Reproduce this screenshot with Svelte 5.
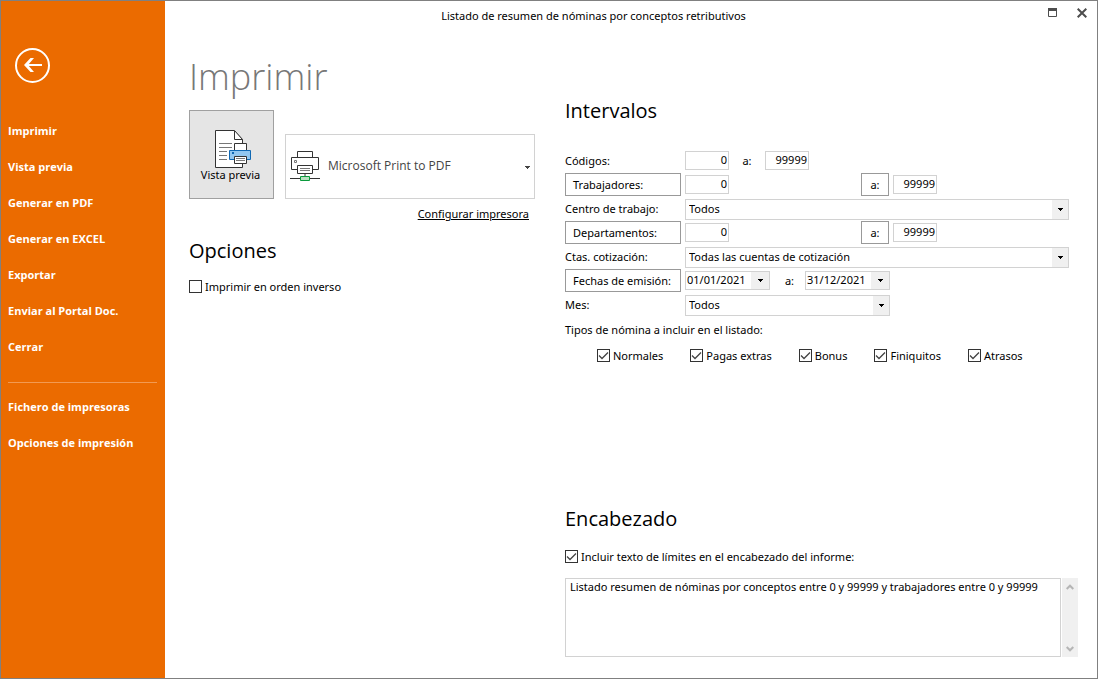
<script>
  const actions = [
    'Imprimir',
    'Vista previa',
    'Generar en PDF',
    'Generar en EXCEL',
    'Exportar',
    'Enviar al Portal Doc.',
    'Cerrar'
  ];
  const settings = ['Fichero de impresoras', 'Opciones de impresión'];

  let types = $state([
    { name: 'Normales', checked: true },
    { name: 'Pagas extras', checked: true },
    { name: 'Bonus', checked: true },
    { name: 'Finiquitos', checked: true },
    { name: 'Atrasos', checked: true }
  ]);

  let reverse = $state(false);
  let includeLimits = $state(true);
  let headerText = $state(
    'Listado resumen de nóminas por conceptos entre 0 y 99999 y trabajadores entre 0 y 99999'
  );
</script>

{#snippet arrow()}
  <svg class="arrow" width="5" height="3" viewBox="0 0 5 3" aria-hidden="true"><path d="M0 0h5v1H4v1H3v1H2V2H1V1H0z" fill="currentColor" /></svg>
{/snippet}

{#snippet dateField(label, value)}
  <span class="date">
    <input type="text" aria-label={label} {value} />
    <button type="button" aria-label="Abrir calendario">{@render arrow()}</button>
  </span>
{/snippet}

<div class="window">
  <aside>
    <button class="back" type="button" aria-label="Volver">
      <svg width="36" height="36" viewBox="0 0 36 36" fill="none" stroke="#fff">
        <circle cx="17.500" cy="18.500" r="16.500" stroke-width="2" />
        <path d="M11 18H27" stroke-width="2" />
        <path d="M19 11h-3.500L9 18l6.500 7H19l-6-7z" fill="#fff" stroke="none" />
      </svg>
    </button>
    <nav>
      {#each actions as item}
        <a href="#accion">{item}</a>
      {/each}
      <hr />
      {#each settings as item}
        <a href="#ajuste">{item}</a>
      {/each}
    </nav>
  </aside>

  <main>
    <header>
      <p>Listado de resumen de nóminas por conceptos retributivos</p>
      <div class="controls">
        <button type="button" aria-label="Maximizar">
          <svg width="9" height="9" viewBox="0 0 9 9"><path d="M.5 1h8v7.500h-8z" fill="none" stroke="#4d4d4d" /><path d="M0 0h9v3H0z" fill="#4d4d4d" /></svg>
        </button>
        <button type="button" aria-label="Cerrar ventana">
          <svg width="10" height="10" viewBox="0 0 10 10"><path d="M.7.7l8.600 8.600M9.300.7L.7 9.300" stroke="#4d4d4d" stroke-width="2" /></svg>
        </button>
      </div>
    </header>

    <div class="columns">
      <section class="print">
        <h1>Imprimir</h1>
        <div class="device">
          <button class="preview" type="button">
            <svg width="37" height="38" viewBox="0 0 37 38" fill="none" stroke="#333">
              <path d="M.5.500H19L27.500 9.500V37.500H.5z" fill="#fff" />
              <path d="M19.500.5V9.500H27.500z" fill="#fff" />
              <path d="M4 13.500H17M4 17.500H17M4 21.500H12M4 25.500H12M4 29.500H12" stroke="#777" />
              <path d="M19.500 13.500H31.500V20.500H19.500z" fill="#fff" />
              <path d="M14.500 20.500H35.500V29.500H14.500z" fill="#92c7f0" stroke="#1068b3" />
              <path d="M17 22h2v2h-2z" fill="#1068b3" stroke="none" />
              <path d="M19.500 26.500H31.500V33.500H19.500z" fill="#fff" />
              <path d="M21 28.500H30M21 30.500H30" stroke="#777" />
            </svg>
            <span>Vista previa</span>
          </button>
          <div class="printer">
            <select aria-label="Impresora"><option>Microsoft Print to PDF</option></select>
            <svg class="device-icon" width="31" height="31" viewBox="0 0 31 31" fill="none" stroke="#333" aria-hidden="true">
              <path d="M7.500.5H22.500V6.500H7.500z" fill="#fff" />
              <path d="M1.500 6.500H28.500V18.500H1.500z" fill="#fff" />
              <path d="M4.500 9.500h2v2h-2z" stroke="#777" />
              <path d="M7.500 14.500H22.500V22.500H7.500z" fill="#fff" />
              <path d="M10 17.500H20M10 19.500H20" stroke="#777" />
              <path d="M15 23V25" stroke="#999" stroke-width="2" />
              <path d="M0 27.500H30" />
              <path d="M10.500 25.500H19.500V29.500H10.500z" fill="#b8dfc0" stroke="#0a9a3c" />
            </svg>
            {@render arrow()}
          </div>
        </div>
        <a class="configure" href="#configurar">Configurar impresora</a>
        <h2>Opciones</h2>
        <label class="check"><input type="checkbox" bind:checked={reverse} />Imprimir en orden inverso</label>
      </section>

      <section class="report">
        <h2>Intervalos</h2>
        <div class="form">
          <div class="row">
            <label class="name" for="codes-from">Códigos:</label>
            <input class="number" id="codes-from" type="text" value="0" />
            <label class="to" for="codes-to">a:</label>
            <input class="number" id="codes-to" type="text" value="99999" />
          </div>
          <div class="row">
            <button class="name" type="button">Trabajadores:</button>
            <input class="number" type="text" aria-label="Trabajadores desde" value="0" />
            <button class="until" type="button">a:</button>
            <input class="number" type="text" aria-label="Trabajadores hasta" value="99999" />
          </div>
          <div class="row">
            <label class="name" for="centre">Centro de trabajo:</label>
            <span class="select wide"><select id="centre"><option>Todos</option></select>{@render arrow()}</span>
          </div>
          <div class="row">
            <button class="name" type="button">Departamentos:</button>
            <input class="number" type="text" aria-label="Departamentos desde" value="0" />
            <button class="until" type="button">a:</button>
            <input class="number" type="text" aria-label="Departamentos hasta" value="99999" />
          </div>
          <div class="row">
            <label class="name" for="accounts">Ctas. cotización:</label>
            <span class="select wide"><select id="accounts"><option>Todas las cuentas de cotización</option></select>{@render arrow()}</span>
          </div>
          <div class="row">
            <button class="name" type="button">Fechas de emisión:</button>
            {@render dateField('Fecha de emisión desde', '01/01/2021')}
            <span class="to">a:</span>
            {@render dateField('Fecha de emisión hasta', '31/12/2021')}
          </div>
          <div class="row">
            <label class="name" for="month">Mes:</label>
            <span class="select month"><select id="month"><option>Todos</option></select>{@render arrow()}</span>
          </div>
        </div>
        <fieldset>
          <legend>Tipos de nómina a incluir en el listado:</legend>
          <div class="types">
            {#each types as type}
              <label class="check"><input type="checkbox" bind:checked={type.checked} />{type.name}</label>
            {/each}
          </div>
        </fieldset>

        <div class="heading">
          <h2>Encabezado</h2>
          <label class="check"><input type="checkbox" bind:checked={includeLimits} />Incluir texto de límites en el encabezado del informe:</label>
          <div class="text">
            <textarea aria-label="Texto del encabezado" bind:value={headerText}></textarea>
            <div class="scroll">
              <button type="button" aria-label="Subir"><svg width="8" height="6" viewBox="0 0 8 6"><path d="M.7 5L4 1.700 7.300 5" fill="none" stroke="#b5b5b5" stroke-width="2" /></svg></button>
              <button type="button" aria-label="Bajar"><svg width="8" height="6" viewBox="0 0 8 6"><path d="M.7 1L4 4.300 7.300 1" fill="none" stroke="#b5b5b5" stroke-width="2" /></svg></button>
            </div>
          </div>
        </div>
      </section>
    </div>
  </main>
</div>

<style>
  :global(body) {
    margin: 0;
  }
  .window,
  .window * {
    box-sizing: border-box;
  }
  .window {
    display: flex;
    min-height: 100vh;
    border: 1px solid #808080;
    background: #fff;
    color: #000;
    font: 11px/16px 'Noto Sans', 'Open Sans', sans-serif;
  }
  button,
  input,
  select,
  textarea {
    margin: 0;
    padding: 0;
    border: 1px solid #d2d2d2;
    border-radius: 0;
    background: #fff;
    color: inherit;
    font: inherit;
    appearance: none;
  }
  svg {
    display: block;
    flex: none;
  }
  h1,
  h2,
  p {
    margin: 0;
  }
  h1,
  h2,
  nav,
  .printer select {
    font-family: 'Open Sans', 'Noto Sans', sans-serif;
  }
  h1 {
    color: #777;
    font-size: 36px;
    font-weight: 300;
    line-height: 54px;
  }
  h2 {
    font-size: 20px;
    font-weight: 400;
    line-height: 28px;
  }

  aside {
    flex: none;
    width: 164px;
    padding: 46px 8px 0 7px;
    background: #eb6b00;
  }
  .back {
    display: block;
    margin-left: 7px;
    border: 0;
    background: none;
  }
  nav {
    display: flex;
    flex-direction: column;
    margin-top: 30px;
  }
  nav a {
    color: #fff;
    font-weight: 700;
    line-height: 36px;
    text-decoration: none;
  }
  hr {
    width: 100%;
    height: 1px;
    margin: 17px 0 6px;
    border: 0;
    background: #f29a52;
  }

  main {
    flex: 1;
    min-width: 0;
  }
  header {
    display: flex;
    align-items: center;
    height: 29px;
  }
  header p {
    flex: 1;
    text-align: center;
  }
  .controls {
    display: flex;
    justify-content: flex-end;
    gap: 10px;
    width: 75px;
    padding: 0 5px 6px 0;
  }
  .controls button {
    display: grid;
    place-items: center;
    width: 20px;
    height: 20px;
    border: 0;
  }

  .columns {
    display: flex;
    gap: 30px;
    padding: 20px 19px 21px 24px;
  }
  .print {
    display: flex;
    flex: none;
    flex-direction: column;
    width: 346px;
  }
  .device {
    display: flex;
    align-items: flex-end;
    gap: 11px;
    margin-top: 6px;
  }
  .preview {
    display: flex;
    flex-direction: column;
    align-items: center;
    width: 85px;
    height: 89px;
    padding: 19px 2px 0 0;
    border-color: #a0a0a0;
    background: #e5e5e5;
    line-height: 14px;
  }
  .preview svg {
    margin-left: 6px;
  }
  .printer {
    position: relative;
    flex: 1;
    height: 65px;
  }
  .printer select {
    width: 100%;
    height: 100%;
    padding: 0 0 2px 42px;
    color: #444;
    font-size: 12px;
  }
  .device-icon {
    position: absolute;
    top: 17px;
    left: 5px;
    pointer-events: none;
  }
  .arrow {
    position: absolute;
    top: calc(50% - 1px);
    right: 6px;
    pointer-events: none;
  }
  .printer .arrow {
    right: 5px;
    color: #444;
  }
  .configure {
    align-self: flex-end;
    margin: 7px 6px 0 0;
    color: inherit;
  }
  .print h2 {
    margin-top: 15px;
  }
  .print .check {
    margin-top: 14px;
  }

  .check {
    display: flex;
    align-items: center;
    gap: 3px;
  }
  .check input {
    flex: none;
    width: 13px;
    height: 13px;
    margin-bottom: 1px;
    border-color: #333;
  }
  .check input:checked {
    background: url("data:image/svg+xml,%3Csvg xmlns='http://www.w3.org/2000/svg' viewBox='0 0 11 11'%3E%3Cpath d='M1 5.500L4 8.500L10 2.500' fill='none' stroke='%23444' stroke-width='1.300'/%3E%3C/svg%3E") center / 11px no-repeat;
  }

  .report {
    flex: 1;
    min-width: 0;
    padding-top: 47px;
  }
  .form {
    display: grid;
    grid-auto-rows: 24px;
    margin: 24px 9px 0 0;
  }
  .row {
    display: flex;
    align-items: center;
  }
  .name {
    flex: none;
    width: 116px;
    margin-right: 4px;
  }
  button.name,
  .until {
    height: 23px;
    margin-bottom: 1px;
    border-color: #999;
  }
  button.name {
    padding-left: 7px;
    text-align: left;
  }
  .number,
  .date {
    height: 19px;
    margin-bottom: 2px;
  }
  .number {
    width: 44px;
    padding: 0 1px 1px 0;
    text-align: right;
  }
  .to {
    width: 36px;
    text-align: center;
  }
  .date + .to {
    width: 35px;
    padding-left: 4px;
  }
  .until {
    width: 28px;
    margin-right: 4px;
    margin-left: 132px;
  }
  .select {
    position: relative;
    display: flex;
    height: 21px;
  }
  .wide {
    flex: 1;
  }
  .month {
    width: 205px;
  }
  .select select {
    width: 100%;
    padding-left: 3px;
    background: linear-gradient(#f0f0f0, #f0f0f0) right / 16px 100% no-repeat;
  }
  .date {
    display: flex;
    width: 85px;
    border: 1px solid #d2d2d2;
  }
  .date input {
    flex: 1;
    min-width: 0;
    padding: 0 0 1px 1px;
    border: 0;
  }
  .date button {
    position: relative;
    width: 18px;
    border: 0;
    background: #f0f0f0;
  }

  fieldset {
    min-width: 0;
    margin: 0;
    padding: 0;
    border: 0;
  }
  legend {
    padding: 0;
    line-height: 26px;
  }
  .types {
    display: flex;
    flex-wrap: wrap;
    gap: 8px 27px;
    padding: 5px 0 0 32px;
  }

  .heading {
    margin-top: 141px;
  }
  .heading .check {
    margin-top: 16px;
  }
  .text {
    display: flex;
    gap: 1px;
    height: 79px;
    margin-top: 13px;
  }
  textarea {
    flex: 1;
    min-width: 0;
    padding: 0 4px;
    overflow: hidden;
    resize: none;
  }
  .scroll {
    display: flex;
    flex-direction: column;
    justify-content: space-between;
    width: 16px;
    background: #f0f0f0;
  }
  .scroll button {
    display: grid;
    place-items: center;
    height: 17px;
    border: 0;
    background: none;
  }
</style>
